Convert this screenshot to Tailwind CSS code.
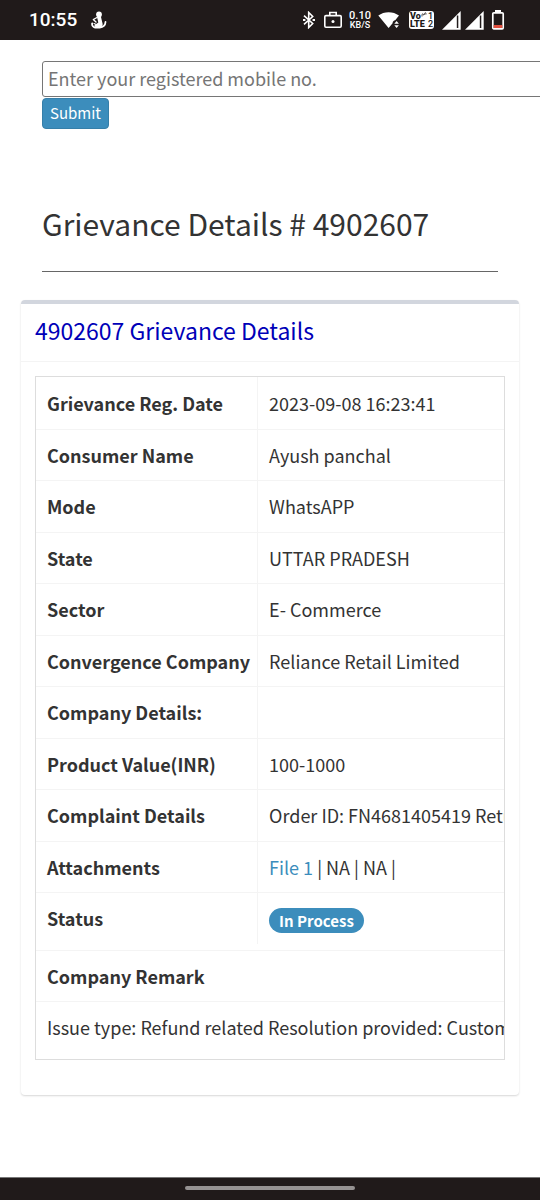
<!DOCTYPE html>
<html lang="en">
<head>
    <meta charset="utf-8">
    <meta name="viewport" content="width=device-width, initial-scale=1">
    <title>Grievance Details</title>
    <script src="https://cdn.jsdelivr.net/npm/@tailwindcss/browser@4"></script>
</head>
<body class="flex min-h-screen flex-col overflow-x-hidden bg-white font-['Noto_Sans_CJK_SC',sans-serif] text-lg text-[#333]">

    <!-- Status bar -->
    <header class="flex h-10 items-center justify-between bg-[#201a1a] pr-[35px] pl-[29px] text-white">
        <div class="flex items-center gap-[14px]">
            <span class="font-['Roboto',sans-serif] text-[19px] font-medium">10:55</span>
            <svg class="h-5 w-4" viewBox="0 0 16 20" fill="none" stroke="currentColor" stroke-linecap="round" stroke-linejoin="round">
                <circle cx="8" cy="4.500" r="2.900" fill="currentColor" stroke="none"/>
                <path d="M6 7h4l1.300 5.500c1 2.500 0 5.500-3.500 5.500-2.500 0-4-1-4.500-2.500l4-3z" fill="currentColor" stroke="none"/>
                <path d="M6 7.500L2.300 9.500 5 12" stroke-width="1.400"/>
                <path d="M1.200 13.300c-.5 2 .8 3.700 3 4.200h4.500c3.600-.3 5.600-2.500 5.800-5.500" stroke-width="1.800"/>
                <path d="M3 13.500l3.300 1.500" stroke-width="1.200"/>
            </svg>
        </div>
        <div class="flex items-center">
            <svg class="h-[18px] w-3" viewBox="0 0 12 18" fill="none" stroke="currentColor" stroke-width="1.600">
                <path d="M1 4.700l8.700 7.800L5.700 16.500V1.500l4 4L1 13.300"/>
                <path d="M0 9h2.400M9.600 9H12" stroke-width="2"/>
            </svg>
            <svg class="ml-[9px] h-[18px] w-[18px]" viewBox="0 0 18 18" fill="none" stroke="currentColor" stroke-width="1.600">
                <rect x=".8" y="4.600" width="16.400" height="11.600" rx="1.200"/>
                <path d="M5.800 4.600V1.500h6.400v3.100"/>
                <circle cx="9" cy="10.400" r="1.500" fill="currentColor" stroke="none"/>
            </svg>
            <div class="ml-[7px] flex w-[22px] flex-col items-center font-['Roboto',sans-serif] font-medium">
                <span class="text-[11px] leading-[10px]">0.10</span>
                <span class="text-[9px] leading-[9px]">KB/S</span>
            </div>
            <svg class="ml-[7px] h-[18px] w-[22px]" viewBox="0 0 22 18" fill="currentColor">
                <path d="M.3 4.600C6 .1 15.200.1 21 4.600L17.200 9.300c-1.500.2-2.600 1.300-2.600 2.900L10.600 17z"/>
                <path d="M18.600 10l2.300 2.700h-4.600zM18.600 17l2.300-2.700h-4.600z"/>
            </svg>
            <div class="ml-[9px] grid h-[18px] w-[25px] grid-cols-[18px_1fr] content-center rounded-[3px] bg-white pl-px font-['Roboto',sans-serif] text-[9px] leading-[8px] font-black text-[#201a1a]">
                <span class="flex">Vo<svg class="h-[6px] w-[6px]" viewBox="0 0 6 6" fill="none" stroke="currentColor" stroke-width=".8"><path d="M1 4.500V2.300q1-1 1.500 0v1M3.700 3V1.200q1-.8 1.300 0v1.300"/></svg></span>
                <span class="font-medium">1</span>
                <span>LTE</span>
                <span class="font-medium">2</span>
            </div>
            <svg class="ml-2 h-[19px] w-[19px]" viewBox="0 0 19 19" fill="currentColor">
                <path d="M18.700 0v18.700H0z"/>
                <path d="M14.800 4.500h1.500V17h-1.500z" fill="#201a1a"/>
            </svg>
            <svg class="ml-1 h-[19px] w-[19px]" viewBox="0 0 19 19" fill="currentColor">
                <path d="M18.700 0v18.700H0z"/>
                <path d="M14.800 4.500h1.500V17h-1.500z" fill="#201a1a"/>
            </svg>
            <svg class="ml-[7px] h-5 w-[14px]" viewBox="0 0 14 20">
                <path d="M4 0h6v3H4z" fill="#fff"/>
                <rect x="1.800" y="2.800" width="10.400" height="16" rx="1" fill="none" stroke="#fff" stroke-width="1.700"/>
                <path d="M2.700 15h8.600v3H2.700z" fill="#e0503f"/>
            </svg>
        </div>
    </header>

    <main class="flex-1 px-[21px]">
        <!-- Search -->
        <form class="px-[21px] pt-[21px]">
            <input type="text" aria-label="Registered mobile number" placeholder="Enter your registered mobile no."
                   class="block h-9 w-[600px] max-w-none rounded-[3px] border border-[#767676] px-[5px] pb-[2px] placeholder:text-[#757575]">
            <button type="button" class="mt-px block h-[31px] rounded-[4px] border border-[#367fa9] bg-[#3c8dbc] px-[7px] pb-[2px] text-[15px] leading-[26px] text-white">Submit</button>
        </form>

        <h1 class="mx-[21px] mt-[70px] border-b border-[#666] pb-6 text-[30px] leading-12">Grievance Details # 4902607</h1>

        <!-- Details -->
        <section class="mt-7 rounded-[4px] border-t-4 border-[#d2d6de] shadow-[0_1px_2px_rgba(0,0,0,0.16)]">
            <h2 class="border-b border-[#f4f4f4] px-[14px] pt-[10px] pb-[15px] text-[23px] leading-8 text-[#0000b8]">4902607 Grievance Details</h2>
            <div class="px-[14px] pt-[14px] pb-[35px]">
                <div class="overflow-hidden border border-[#ddd] pb-[6px] whitespace-nowrap">
                    <table class="mb-[6px] w-full border-collapse text-left">
                        <tbody class="[&_td]:border-l [&_td]:border-[#f4f4f4] [&_td]:px-[11px] [&_th]:w-[222px] [&_th]:pr-[7px] [&_th]:pl-[11px] [&_tr]:border-b [&_tr]:border-[#f4f4f4] [&_tr:last-child]:border-b-0">
                            <tr class="h-[52px] even:h-[51px]"><th>Grievance Reg. Date</th><td>2023-09-08 16:23:41</td></tr>
                            <tr class="h-[52px] even:h-[51px]"><th>Consumer Name</th><td>Ayush panchal</td></tr>
                            <tr class="h-[52px] even:h-[51px]"><th>Mode</th><td>WhatsAPP</td></tr>
                            <tr class="h-[52px] even:h-[51px]"><th>State</th><td>UTTAR PRADESH</td></tr>
                            <tr class="h-[52px] even:h-[51px]"><th>Sector</th><td>E- Commerce</td></tr>
                            <tr class="h-[52px] even:h-[51px]"><th>Convergence Company</th><td>Reliance Retail Limited</td></tr>
                            <tr class="h-[52px] even:h-[51px]"><th>Company Details:</th><td></td></tr>
                            <tr class="h-[52px] even:h-[51px]"><th>Product Value(INR)</th><td>100-1000</td></tr>
                            <tr class="h-[52px] even:h-[51px]"><th>Complaint Details</th><td>Order ID: FN4681405419 Retu</td></tr>
                            <tr class="h-[52px] even:h-[51px]"><th>Attachments</th><td><a href="#" class="text-[#3c8dbc]">File 1</a> | NA | NA |</td></tr>
                            <tr class="h-[52px] even:h-[51px]"><th>Status</th><td><span class="inline-block rounded-full bg-[#3c8dbc] px-[10px] align-middle text-[15px] leading-[25px] font-bold text-white">In Process</span></td></tr>
                        </tbody>
                    </table>
                    <table class="w-full border-collapse text-left">
                        <tbody class="[&_td]:px-[11px] [&_th]:px-[11px] [&_tr]:border-t [&_tr]:border-[#f4f4f4]">
                            <tr class="h-[51px]"><th>Company Remark</th></tr>
                            <tr class="h-[51px]"><td>Issue type: Refund related Resolution provided: Custome</td></tr>
                        </tbody>
                    </table>
                </div>
            </div>
        </section>
    </main>

    <!-- Navigation bar -->
    <footer class="flex h-[23px] justify-center border-t border-[#777] bg-[#201a1a] pt-2">
        <div class="h-1 w-[170px] rounded-full bg-[#959292]"></div>
    </footer>

</body>
</html>
